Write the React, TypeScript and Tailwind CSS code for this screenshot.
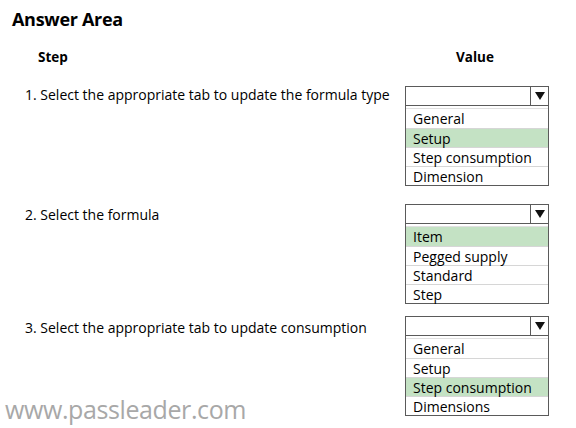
const steps = [
  {
    label: '1. Select the appropriate tab to update the formula type',
    options: ['General', 'Setup', 'Step consumption', 'Dimension'],
    selected: 1,
    gap: 'mt-[20px]',
    textPad: 'pt-0',
  },
  {
    label: '2. Select the formula',
    options: ['Item', 'Pegged supply', 'Standard', 'Step'],
    selected: 0,
    gap: 'mt-[18px]',
    textPad: 'pt-[2px]',
  },
  {
    label: '3. Select the appropriate tab to update consumption',
    options: ['General', 'Setup', 'Step consumption', 'Dimensions'],
    selected: 2,
    gap: 'mt-[12px]',
    textPad: 'pt-[3px]',
  },
];

export default function App() {
  return (
    <div className="relative w-[576px] h-[428px] bg-white text-black font-['Open_Sans',sans-serif] overflow-hidden">
      <div className="pl-[12px] pt-[6px]">
        <h1 className="text-[18px] font-bold leading-[26px] tracking-[-0.3px]">Answer Area</h1>
      </div>
      <div className="flex items-center mt-[16px] h-[18px] text-[13.5px] font-bold">
        <div className="pl-[38px] w-[456px]">Step</div>
        <div>Value</div>
      </div>
      {steps.map((step, i) => (
        <div key={i} className={`flex items-start ${step.gap}`}>
          <div className={`pl-[25px] w-[405px] text-[14px] leading-[18px] ${step.textPad}`}>
            {step.label}
          </div>
          <Dropdown options={step.options} selected={step.selected} />
        </div>
      ))}
      <div className="absolute left-[5px] top-[394px] text-[25px] leading-[30px] text-[#a8a8a8] font-['Open_Sans',sans-serif] tracking-[-0.4px]">
        www.passleader.com
      </div>
    </div>
  );
}

interface DropdownProps {
  options: string[];
  selected: number;
}
function Dropdown({ options, selected }: DropdownProps) {
  return (
    <div className="w-[144px] border border-[#5a5a5a]">
      <div className="flex h-[19px] border-b border-[#5a5a5a]">
        <div className="flex-1"></div>
        <div className="w-[18px] border-l border-[#5a5a5a] flex items-center justify-center">
          <svg width="10" height="8" viewBox="0 0 10 8" aria-hidden>
            <path d="M0 0 L10 0 L5 8 Z" fill="#111" />
          </svg>
        </div>
      </div>
      <div className="mt-[2px] border-t border-[#e0e0e0]">
        {options.map((opt, i) => (
          <div
            key={opt}
            className={`h-[19px] pl-[7px] flex items-center text-[14px] ${
              i > 0 ? 'border-t border-[#d6d6d6]' : ''
            } ${i === selected ? 'bg-[#c4e2c4]' : ''}`}
          >
            {opt}
          </div>
        ))}
      </div>
    </div>
  );
}
